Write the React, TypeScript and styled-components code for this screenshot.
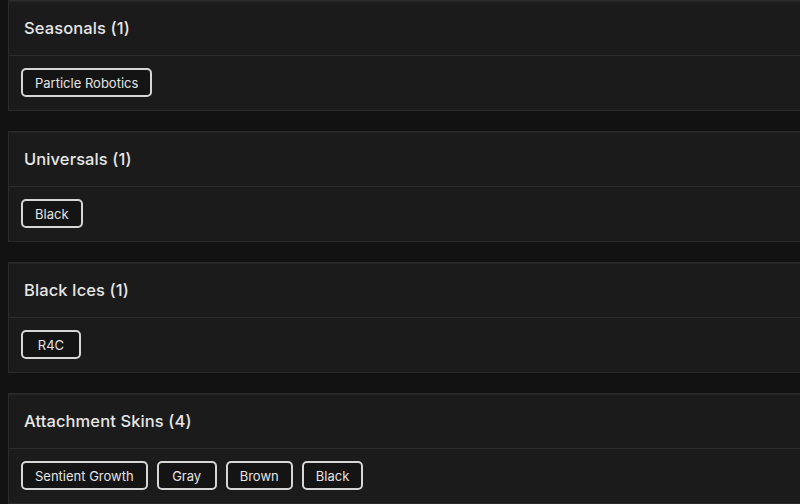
import { FC } from 'react'
import styled, { createGlobalStyle } from 'styled-components'

type Group = {
  title: string,
  items: string[]
}

const groups: Group[] = [
  { title: 'Seasonals', items: ['Particle Robotics'] },
  { title: 'Universals', items: ['Black'] },
  { title: 'Black Ices', items: ['R4C'] },
  { title: 'Attachment Skins', items: ['Sentient Growth', 'Gray', 'Brown', 'Black'] },
]

const GlobalStyle = createGlobalStyle`
  html, body {
    margin: 0;
    padding: 0;
    background: #121212;
    overflow: hidden;
  }
  body {
    font-family: Inter, "Open Sans", sans-serif;
    color: #e8e8e8;
  }
`

const App: FC = () => {
  return (
    <Page>
      <GlobalStyle />
      {groups.map((group) => (
        <Card key={group.title}>
          <Header>
            <Title>{group.title} ({group.items.length})</Title>
          </Header>
          <Body>
            {group.items.map((item) => (
              <Chip key={item}>{item}</Chip>
            ))}
          </Body>
        </Card>
      ))}
    </Page>
  )
}

export default App

const Page = styled('div')`
  display: flex;
  flex-direction: column;
  gap: 20px;
  padding: 0 0 0 8px;
  width: 800px;
  box-sizing: border-box;
`

const Card = styled('section')`
  background: #1b1b1b;
  border: 1px solid #2a2a2a;
  border-right: none;
  box-shadow: inset 0 1px 0 #262626;
`

const Header = styled('div')`
  height: 55px;
  display: flex;
  align-items: center;
  padding-left: 15px;
  border-bottom: 1px solid #2c2c2c;
  box-sizing: border-box;
`

const Title = styled('h2')`
  margin: 0;
  font-size: 16.5px;
  font-weight: 500;
  letter-spacing: 0.1px;
  color: #e6e6e6;
`

const Body = styled('div')`
  display: flex;
  gap: 9px;
  padding: 12px 12px 13px 12px;
`

const Chip = styled('span')`
  min-width: 60px;
  box-sizing: border-box;
  height: 29px;
  padding: 0 12px;
  display: inline-flex;
  align-items: center;
  justify-content: center;
  border: 2px solid #d6d6d6;
  border-radius: 5px;
  background: #141414;
  font-size: 13px;
  color: #e4e4e4;
`
